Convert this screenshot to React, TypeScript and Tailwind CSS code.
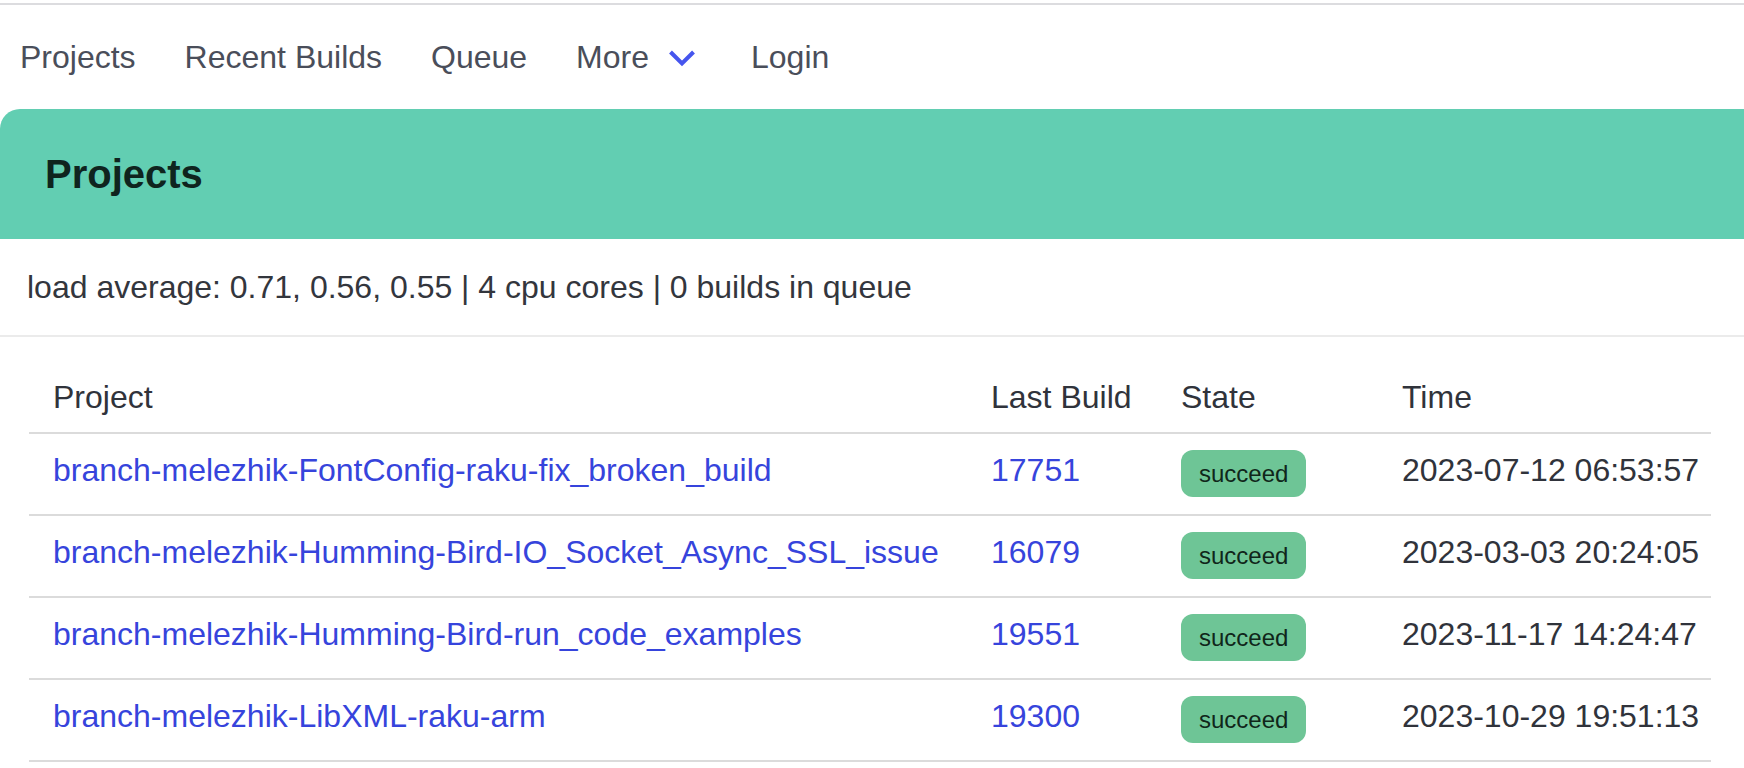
import React from 'react';

type BuildRow = {
  project: string;
  build: number;
  state: string;
  time: string;
};

const rows: BuildRow[] = [
  { project: 'branch-melezhik-FontConfig-raku-fix_broken_build', build: 17751, state: 'succeed', time: '2023-07-12 06:53:57' },
  { project: 'branch-melezhik-Humming-Bird-IO_Socket_Async_SSL_issue', build: 16079, state: 'succeed', time: '2023-03-03 20:24:05' },
  { project: 'branch-melezhik-Humming-Bird-run_code_examples', build: 19551, state: 'succeed', time: '2023-11-17 14:24:47' },
  { project: 'branch-melezhik-LibXML-raku-arm', build: 19300, state: 'succeed', time: '2023-10-29 19:51:13' },
];

const Chevron: React.FC = () => (
  <svg width="28" height="17" viewBox="0 0 28 17" fill="none" className="text-[#4655ee]">
    <path d="M2.5 2 L14 13.5 L25.5 2" stroke="currentColor" strokeWidth="4" strokeLinejoin="miter" />
  </svg>
);

const Navbar: React.FC = () => (
  <nav className="flex h-[104px] items-center gap-[49px] pl-[20px] text-[32px] leading-[48px] text-[#4a4e5a]">
    <a href="#">Projects</a>
    <a href="#">Recent Builds</a>
    <a href="#">Queue</a>
    <a href="#" className="flex items-center">
      More
      <span className="ml-[19px] mt-[2px] flex">
        <Chevron />
      </span>
    </a>
    <a href="#" className="ml-[6px]">Login</a>
  </nav>
);

const StateTag: React.FC<{ state: string }> = ({ state }) => (
  <span className="flex h-[47px] w-fit items-center rounded-[12px] bg-[#6ec596] px-[18px] text-[24px] leading-none text-[#10261a]">
    {state}
  </span>
);

const ProjectsTable: React.FC = () => (
  <table className="ml-[29px] mt-[25px] w-[1682px] table-fixed border-collapse text-[32px] leading-[48px]">
    <colgroup>
      <col className="w-[938px]" />
      <col className="w-[190px]" />
      <col className="w-[221px]" />
      <col className="w-[333px]" />
    </colgroup>
    <thead>
      <tr className="border-b-2 border-[#dbdbdb] text-[#30333b]">
        <th className="pb-[11px] pl-[24px] pt-[11px] text-left font-normal">Project</th>
        <th className="whitespace-nowrap pb-[11px] pl-[24px] pt-[11px] text-left font-normal">Last Build</th>
        <th className="pb-[11px] pl-[24px] pt-[11px] text-left font-normal">State</th>
        <th className="pb-[11px] pl-[24px] pt-[11px] text-left font-normal">Time</th>
      </tr>
    </thead>
    <tbody>
      {rows.map((row) => (
        <tr key={row.build} className="border-b-2 border-[#dbdbdb]">
          <td className="whitespace-nowrap pb-[20px] pl-[24px] pt-[12px] align-top">
            <a href="#" className="text-[#3644dc]">{row.project}</a>
          </td>
          <td className="pb-[20px] pl-[24px] pt-[12px] align-top">
            <a href="#" className="text-[#3644dc]">{row.build}</a>
          </td>
          <td className="pl-[24px] pt-[16px] align-top">
            <StateTag state={row.state} />
          </td>
          <td className="whitespace-nowrap pb-[20px] pl-[24px] pt-[12px] align-top text-[#30333b]">
            {row.time}
          </td>
        </tr>
      ))}
    </tbody>
  </table>
);

export default function App() {
  return (
    <div className="min-h-screen overflow-hidden bg-white font-['Liberation_Sans',Helvetica,Arial,sans-serif]">
      <div className="mt-[3px] h-[2px] bg-[#dcdcdf]" />
      <Navbar />

      <section>
        <div className="flex h-[130px] items-center rounded-tl-[20px] bg-[#62ceb2] pl-[45px]">
          <h1 className="text-[40px] font-bold leading-none text-[#0f241e]">Projects</h1>
        </div>
        <div className="flex h-[98px] items-center border-b-2 border-[#ebebeb] px-[27px] text-[32px] leading-[48px] text-[#33363d]">
          load average: 0.71, 0.56, 0.55 | 4 cpu cores | 0 builds in queue
        </div>
        <ProjectsTable />
      </section>
    </div>
  );
}
